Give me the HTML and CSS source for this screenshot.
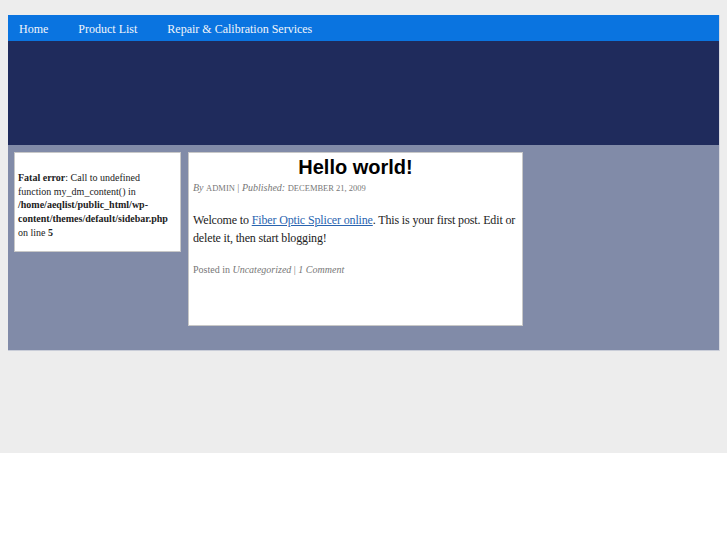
FILE: index.html
```html
<!DOCTYPE html>
<html>
<head>
<meta charset="utf-8">
<link rel="stylesheet" href="styles.css">
</head>
<body>
<div class="page">
  <div class="wrap">
    <nav class="nav">
      <a class="nav-item first" href="#">Home</a>
      <a class="nav-item" href="#">Product List</a>
      <a class="nav-item" href="#">Repair &amp; Calibration Services</a>
    </nav>
    <div class="header"></div>
    <div class="content">
      <aside class="sidebar">
        <p class="err"><b>Fatal error</b>: Call to undefined function my_dm_content() in <b>/home/aeqlist/public_html/wp-content/themes/default/sidebar.php</b> on line <b>5</b></p>
      </aside>
      <main class="post">
        <h1 class="title">Hello world!</h1>
        <div class="meta"><i>By</i> <span class="caps">admin</span> | <i>Published:</i> <span class="caps">December 21, 2009</span></div>
        <p class="body">Welcome to <a href="#">Fiber Optic Splicer online</a>. This is your first post. Edit or delete it, then start blogging!</p>
        <div class="foot">Posted in <i>Uncategorized</i> | <i>1 Comment</i></div>
      </main>
    </div>
  </div>
</div>
</body>
</html>
```

FILE: styles.css
```css
html, body {
  margin: 0;
  padding: 0;
  background: #ffffff;
}
body {
  font-family: "Liberation Serif", "Times New Roman", serif;
}
.page {
  background: #ededed;
  height: 453px;
  padding: 15px 8px 0 8px;
  box-sizing: border-box;
}
.wrap {
  width: 711px;
  border-right: 1px solid #d7d9e0;
  border-bottom: 1px solid #c9cdd8;
}
.nav {
  height: 26px;
  box-sizing: border-box;
  background: #0a74e0;
  display: flex;
  align-items: center;
  padding: 3px 0 0 11px;
}
.nav-item {
  color: #f2f4fa;
  text-decoration: none;
  font-size: 12px;
  margin-right: 30px;
}
.header {
  height: 104px;
  background: #1f2b5c;
}
.content {
  background: #818ba8;
  height: 205px;
  display: flex;
  align-items: flex-start;
  padding: 7px 0 0 6px;
  box-sizing: border-box;
  gap: 7px;
}
.sidebar {
  width: 167px;
  height: 100px;
  box-sizing: border-box;
  background: #ffffff;
  border: 1px solid #c8c8c8;
  padding: 18px 10px 0 3px;
}
.err {
  margin: 0;
  font-size: 10px;
  line-height: 13.7px;
  color: #222;
}
.post {
  width: 335px;
  height: 174px;
  box-sizing: border-box;
  background: #ffffff;
  border: 1px solid #c8c8c8;
  padding: 2px 4px 0 4px;
}
.title {
  margin: 0;
  text-align: center;
  font-family: "Liberation Sans", Arial, sans-serif;
  font-size: 20px;
  line-height: 24px;
  font-weight: bold;
  color: #000;
}
.meta {
  margin-top: 2px;
  font-size: 10px;
  color: #777;
  line-height: 14px;
}
.caps {
  text-transform: uppercase;
  font-size: 8.5px;
}
.body {
  margin: 16px 0 0 0;
  font-size: 12px;
  letter-spacing: -0.15px;
  line-height: 18px;
  color: #222;
}
.body a {
  color: #2a64b0;
  text-decoration: underline;
}
.foot {
  margin-top: 16px;
  font-size: 10px;
  color: #777;
  line-height: 14px;
}
```
